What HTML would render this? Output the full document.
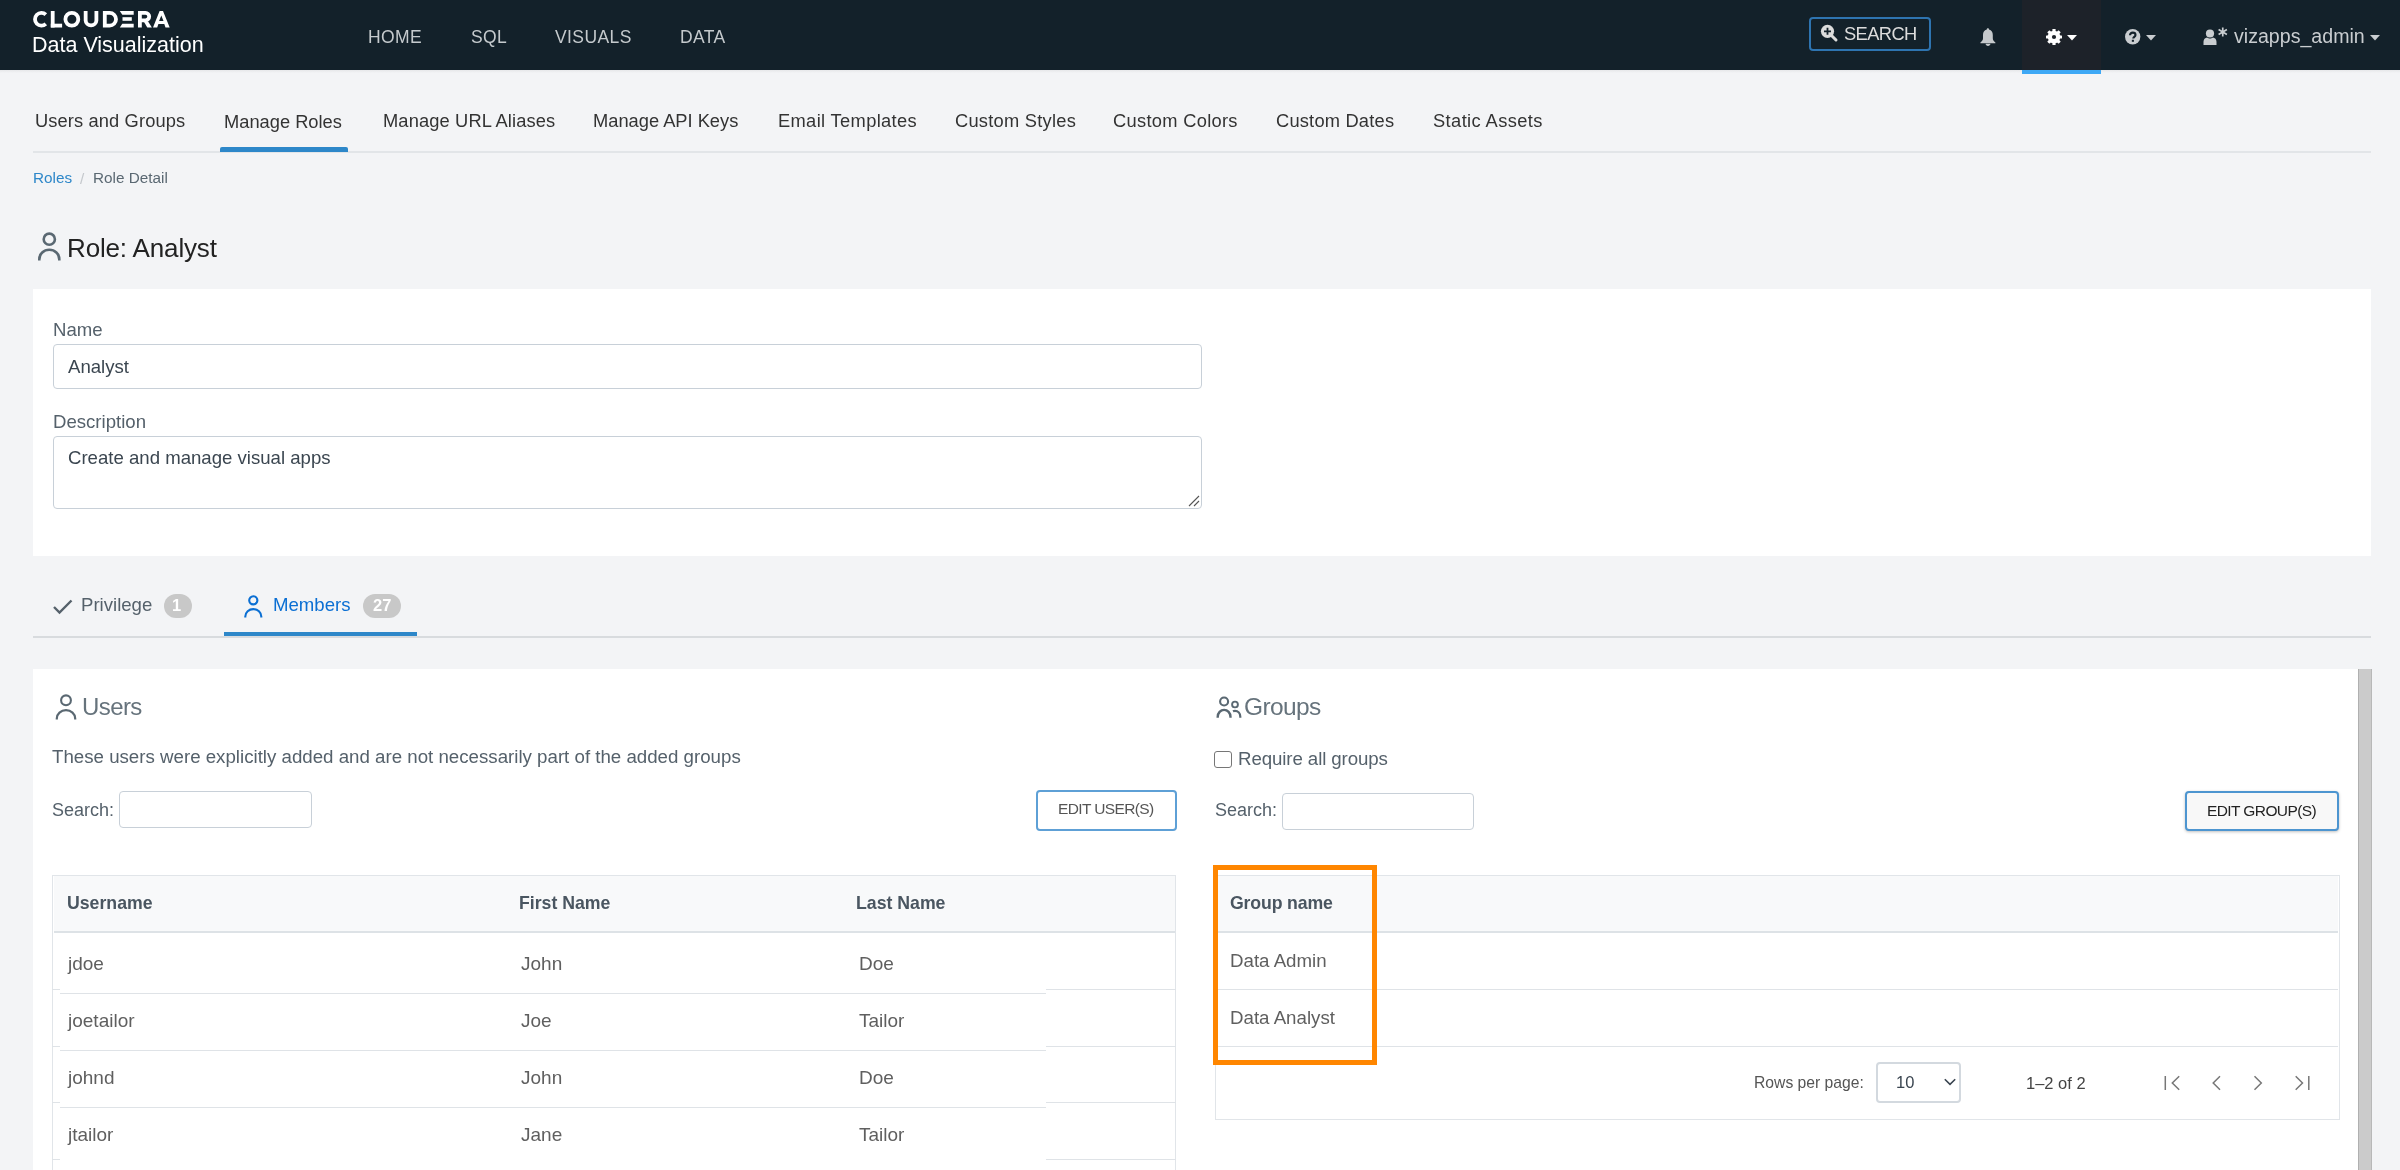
<!DOCTYPE html>
<html><head><meta charset="utf-8">
<style>
*{margin:0;padding:0;box-sizing:border-box}
html,body{width:2400px;height:1170px;overflow:hidden;background:#f3f4f6;font-family:"Liberation Sans",sans-serif}
.a{position:absolute;white-space:nowrap;will-change:transform}
svg{position:absolute;overflow:visible}
#hdr{position:absolute;left:0;top:0;width:2400px;height:70px;background:#13212a}
#hdrsh{position:absolute;left:0;top:70px;width:2400px;height:3px;background:linear-gradient(#e6e7e9,#f3f4f6)}
.nav{font-size:17.5px;color:#c5cacd;letter-spacing:0.4px;top:26.5px}
.sub{font-size:18.3px;color:#333;top:110px}
.card{position:absolute;background:#fff}
.lbl{font-size:18.6px;color:#55616b}
.inp{position:absolute;border:1.5px solid #c8d0d8;border-radius:4px;background:#fff}
.itxt{font-size:18.6px;color:#3b4650}
.th{position:absolute;white-space:nowrap;will-change:transform;font-size:17.7px;font-weight:bold;color:#4a5661;top:893px}
.td{position:absolute;white-space:nowrap;will-change:transform;font-size:19px;color:#5f5f5f}
.gd{font-size:18.7px}
.hl{position:absolute;height:1.5px;background:#dfe3e7}
.vl{position:absolute;width:1.5px;background:#e1e5e9}
</style></head><body>
<div id="hdr"></div>
<div id="hdrsh"></div>
<!-- logo -->
<svg style="left:0;top:0" width="200" height="35" viewBox="0 0 200 35">
 <g stroke="#fff" stroke-width="3.8" fill="none">
  <path d="M45.8 14.6A6.4 6.4 0 1 0 45.8 23.9"/>
  <circle cx="71.85" cy="19.25" r="6.45"/>
  <path d="M85.65 11V20.3A5.38 5.38 0 0 0 96.4 20.3V11"/>
  <path d="M104.8 12.9H109.65A6.35 6.35 0 0 1 109.65 25.6H104.8Z"/>
  <path d="M139.9 27.5V12.9H145.5A3.7 3.7 0 0 1 145.5 20.3H139.9"/>
 </g>
 <g fill="#fff">
  <rect x="50.8" y="11" width="3.8" height="16.5"/>
  <rect x="50.8" y="23.7" width="11.3" height="3.8"/>
  <path d="M119.8 11H133.7V14.8H122.3Z"/>
  <rect x="122.5" y="17.2" width="9.3" height="3.6"/>
  <path d="M143.6 21.2H148L151.9 27.5H147.3Z"/>
  <path d="M122.3 23.8H133.7V27.5H119.8Z"/>
  <path fill-rule="evenodd" d="M153 27.5L159.6 11H163L169.7 27.5H165.5L164.3 24H158.4L157.2 27.5ZM159.1 21H163.5L161.3 15.4Z"/>
 </g>
</svg>
<div class="a" style="left:32px;top:33px;font-size:21.5px;color:#fff">Data Visualization</div>
<!-- nav -->
<div class="a nav" style="left:368px">HOME</div>
<div class="a nav" style="left:471px">SQL</div>
<div class="a nav" style="left:555px">VISUALS</div>
<div class="a nav" style="left:680px">DATA</div>
<!-- header right -->
<div class="a" style="left:1809px;top:17px;width:122px;height:34px;border:2px solid #2e74b0;border-radius:4px"></div>
<svg style="left:1820px;top:24px" width="18" height="18" viewBox="0 0 18 18">
 <circle cx="7.5" cy="7.3" r="6.6" fill="#dcdcdc"/>
 <line x1="11.5" y1="11.5" x2="16" y2="16" stroke="#dcdcdc" stroke-width="3" stroke-linecap="round"/>
 <path d="M7.5 3.8v7M4 7.3h7" stroke="#13212a" stroke-width="1.8"/>
</svg>
<div class="a" style="left:1843.5px;top:22.5px;font-size:18.3px;color:#dcdcdc;letter-spacing:-0.6px">SEARCH</div>
<!-- bell -->
<svg style="left:1979px;top:28px" width="18" height="18" viewBox="0 0 18 18">
 <path d="M9 0.3c.8 0 1 .6 1 1.2 2.6.6 3.8 2.6 3.8 5.6v3.2c0 1.6.9 2.8 2.6 4.2v.8H1.4v-.8c1.7-1.4 2.6-2.6 2.6-4.2V7.1c0-3 1.2-5 3.8-5.6 0-.6.2-1.2 1-1.2z" fill="#c5c9cc"/>
 <path d="M6.6 15.7h4.8c0 1.3-1.1 2.2-2.4 2.2s-2.4-.9-2.4-2.2z" fill="#c5c9cc"/>
</svg>
<div class="a" style="left:2022px;top:0;width:79px;height:70px;background:#1d2229"></div>
<div class="a" style="left:2022px;top:70px;width:79px;height:4px;background:#3ea8f5"></div>
<!-- gear -->
<svg style="left:2046px;top:29px" width="16" height="16" viewBox="-8 -8 16 16">
 <g fill="#fff">
  <circle r="6.3"/>
  <rect x="-1.6" y="-8" width="3.2" height="16" rx=".5"/>
  <rect x="-1.6" y="-8" width="3.2" height="16" rx=".5" transform="rotate(45)"/>
  <rect x="-1.6" y="-8" width="3.2" height="16" rx=".5" transform="rotate(90)"/>
  <rect x="-1.6" y="-8" width="3.2" height="16" rx=".5" transform="rotate(135)"/>
 </g>
 <circle r="2.1" fill="#1d2229"/>
</svg>
<svg style="left:2067px;top:35px" width="10" height="5.5" viewBox="0 0 10 5.5"><path d="M0 0h10L5 5.5z" fill="#fff"/></svg>
<!-- question -->
<svg style="left:2125px;top:29.3px" width="15.4" height="15.4" viewBox="0 0 16 16">
 <circle cx="8" cy="8" r="8" fill="#c9cdd0"/>
 <path d="M5.2 6.6c0-1.8 1.2-2.8 2.9-2.8 1.6 0 2.8 1 2.8 2.4 0 2-2.3 2-2.3 3.6" stroke="#13212a" stroke-width="2.2" fill="none"/>
 <rect x="7.1" y="11.2" width="2.2" height="2.1" fill="#13212a"/>
</svg>
<svg style="left:2146px;top:35px" width="10" height="5.5" viewBox="0 0 10 5.5"><path d="M0 0h10L5 5.5z" fill="#c9cdd0"/></svg>
<!-- user -->
<svg style="left:2203px;top:27px" width="26" height="19" viewBox="0 0 26 19">
 <circle cx="7" cy="6.5" r="4.1" fill="#c9cdd0"/>
 <path d="M0.5 18v-3.2c0-2.6 1.6-4.2 3.6-4.4 1 .8 1.8 1.1 2.9 1.1s1.9-.3 2.9-1.1c2 .2 3.6 1.8 3.6 4.4V18z" fill="#c9cdd0"/>
 <g stroke="#c9cdd0" stroke-width="1.7"><path d="M19.75 0.5v9M15.6 2.6l8.3 4.8M15.6 7.4l8.3-4.8"/></g>
</svg>
<div class="a" style="left:2234px;top:25px;font-size:19.6px;color:#c9cdd0">vizapps_admin</div>
<svg style="left:2370px;top:35px" width="10" height="5.5" viewBox="0 0 10 5.5"><path d="M0 0h10L5 5.5z" fill="#c9cdd0"/></svg>

<!-- sub tabs -->
<div class="a sub" style="left:35px;letter-spacing:0.12px">Users and Groups</div>
<div class="a sub" style="left:224px;top:111px">Manage Roles</div>
<div class="a sub" style="left:382.5px;letter-spacing:0.13px">Manage URL Aliases</div>
<div class="a sub" style="left:593px">Manage API Keys</div>
<div class="a sub" style="left:778px;letter-spacing:0.35px">Email Templates</div>
<div class="a sub" style="left:955px;letter-spacing:0.25px">Custom Styles</div>
<div class="a sub" style="left:1113px;letter-spacing:0.3px">Custom Colors</div>
<div class="a sub" style="left:1276px;letter-spacing:0.2px">Custom Dates</div>
<div class="a sub" style="left:1433px;letter-spacing:0.4px">Static Assets</div>
<div class="hl" style="left:33px;top:151px;width:2338px;height:2px;background:#e2e5e8"></div>
<div class="a" style="left:220px;top:147px;width:127.5px;height:4.5px;background:#2d87c9;border-radius:2px 2px 0 0"></div>

<!-- breadcrumb -->
<div class="a" style="left:33px;top:169px;font-size:15.3px;color:#2d87c9">Roles</div>
<div class="a" style="left:79.5px;top:169.5px;font-size:15.3px;color:#c4c8cc">/</div>
<div class="a" style="left:93px;top:169px;font-size:15.3px;color:#5a6872">Role Detail</div>

<!-- title -->
<svg style="left:37px;top:232px" width="25" height="29" viewBox="0 0 25 29">
 <circle cx="12.3" cy="7.2" r="5.6" stroke="#5a6872" stroke-width="2.6" fill="none"/>
 <path d="M2.3 28.6v-1.2c0-5.6 4.5-9.6 10-9.6s10 4 10 9.6v1.2" stroke="#5a6872" stroke-width="2.6" fill="none"/>
</svg>
<div class="a" style="left:67px;top:233px;font-size:26px;color:#222;letter-spacing:-0.15px">Role: Analyst</div>

<!-- form card -->
<div class="card" style="left:33px;top:289px;width:2338px;height:267px"></div>
<div class="a lbl" style="left:53px;top:319px">Name</div>
<div class="inp" style="left:53px;top:344px;width:1149px;height:45px"></div>
<div class="a itxt" style="left:68px;top:356px">Analyst</div>
<div class="a lbl" style="left:53px;top:410.5px">Description</div>
<div class="inp" style="left:53px;top:435.5px;width:1149px;height:73.5px"></div>
<div class="a itxt" style="left:68px;top:447px">Create and manage visual apps</div>
<svg style="left:1188px;top:495px" width="12" height="12" viewBox="0 0 12 12"><path d="M11 1L1 11M11 6L6 11" stroke="#555" stroke-width="1.1"/></svg>

<!-- tabs -->
<svg style="left:53px;top:599px" width="20" height="15" viewBox="0 0 20 15"><path d="M1 8l5.5 5.5L18.5 1.5" stroke="#55616b" stroke-width="2.4" fill="none"/></svg>
<div class="a" style="left:81px;top:594px;font-size:18.6px;color:#55616b">Privilege</div>
<div class="a" style="left:163.5px;top:594px;width:28px;height:24px;border-radius:12px;background:#c8c8c8"></div>
<div class="a" style="left:171.5px;top:596px;font-size:16.5px;font-weight:bold;color:#fff">1</div>
<svg style="left:244px;top:595px" width="19" height="23" viewBox="0 0 19 23">
 <circle cx="9.3" cy="5.3" r="4.1" stroke="#0b6fd3" stroke-width="2.1" fill="none"/>
 <path d="M1.3 22.6v-1c0-4.3 3.6-7.5 8-7.5s8 3.2 8 7.5v1" stroke="#0b6fd3" stroke-width="2.1" fill="none"/>
</svg>
<div class="a" style="left:273px;top:594px;font-size:18.6px;color:#0b6fd3">Members</div>
<div class="a" style="left:362.5px;top:594px;width:38px;height:24px;border-radius:12px;background:#c8c8c8"></div>
<div class="a" style="left:372.5px;top:596px;font-size:16.5px;font-weight:bold;color:#fff">27</div>
<div class="hl" style="left:33px;top:636px;width:2338px;height:1.5px;background:#d8dbde"></div>
<div class="a" style="left:224px;top:632px;width:193px;height:4px;background:#2d87c9"></div>

<!-- members card -->
<div class="card" style="left:33px;top:669px;width:2338px;height:501px"></div>
<div class="a" style="left:2358px;top:669px;width:13.5px;height:501px;background:#cbcbcb;border-left:1px solid #b0b0b0;border-right:1px solid #b8b8b8"></div>

<!-- Users -->
<svg style="left:55px;top:694px" width="22" height="26" viewBox="0 0 22 26">
 <circle cx="11" cy="6.3" r="4.9" stroke="#5a6872" stroke-width="2.1" fill="none"/>
 <path d="M1.8 25.6v-1.1c0-4.7 4.1-8.3 9.2-8.3s9.2 3.6 9.2 8.3v1.1" stroke="#5a6872" stroke-width="2.2" fill="none"/>
</svg>
<div class="a" style="left:82px;top:692.5px;font-size:24px;color:#66737c;letter-spacing:-0.6px">Users</div>
<div class="a" style="left:52px;top:746px;font-size:18.7px;color:#55616b">These users were explicitly added and are not necessarily part of the added groups</div>
<div class="a" style="left:52px;top:800px;font-size:18px;color:#55616b">Search:</div>
<div class="inp" style="left:119px;top:791px;width:192.5px;height:37px"></div>
<div class="a" style="left:1036px;top:789.5px;width:140.5px;height:40.5px;border:2px solid #5ea0d6;border-radius:4px;background:#fff"></div>
<div class="a" style="left:1058px;top:800px;font-size:15.5px;color:#555;letter-spacing:-0.62px">EDIT USER(S)</div>

<!-- users table -->
<div class="a" style="left:52px;top:874.5px;width:1124px;height:300px;border:1.5px solid #e1e5e9;border-bottom:none;background:#fff"></div>
<div class="a" style="left:53.5px;top:876px;width:1121px;height:55.5px;background:#f8f9fa"></div>
<div class="hl" style="left:53.5px;top:931px;width:1121px;height:2.2px;background:#dde2e6"></div>
<div class="th" style="left:67px">Username</div>
<div class="th" style="left:519px">First Name</div>
<div class="th" style="left:856px">Last Name</div>
<!-- row lines -->
<div class="hl" style="left:52px;top:989px;width:8px;height:1px"></div>
<div class="hl" style="left:60px;top:992.5px;width:986px"></div>
<div class="hl" style="left:1046px;top:989px;width:130px;height:1px"></div>
<div class="hl" style="left:52px;top:1046px;width:8px;height:1px"></div>
<div class="hl" style="left:60px;top:1049.5px;width:986px"></div>
<div class="hl" style="left:1046px;top:1046px;width:130px;height:1px"></div>
<div class="hl" style="left:52px;top:1102px;width:8px;height:1px"></div>
<div class="hl" style="left:60px;top:1106.5px;width:986px"></div>
<div class="hl" style="left:1046px;top:1102px;width:130px;height:1px"></div>
<div class="hl" style="left:52px;top:1159px;width:8px;height:1px"></div>
<div class="hl" style="left:1046px;top:1159px;width:130px;height:1px"></div>
<!-- rows -->
<div class="td" style="left:67.5px;top:953px">jdoe</div>
<div class="td" style="left:520.5px;top:953px">John</div>
<div class="td" style="left:858.5px;top:953px">Doe</div>
<div class="td" style="left:67.5px;top:1010px">joetailor</div>
<div class="td" style="left:520.5px;top:1010px">Joe</div>
<div class="td" style="left:858.5px;top:1010px">Tailor</div>
<div class="td" style="left:67.5px;top:1067px">johnd</div>
<div class="td" style="left:520.5px;top:1067px">John</div>
<div class="td" style="left:858.5px;top:1067px">Doe</div>
<div class="td" style="left:67.5px;top:1124px">jtailor</div>
<div class="td" style="left:520.5px;top:1124px">Jane</div>
<div class="td" style="left:858.5px;top:1124px">Tailor</div>

<!-- Groups -->
<svg style="left:1216px;top:696px" width="26" height="22" viewBox="0 0 26 22">
 <circle cx="8.1" cy="5.5" r="4" stroke="#5a6872" stroke-width="2.1" fill="none"/>
 <path d="M1.7 21.7v-.8c0-4 2.9-7 6.4-7s6.4 3 6.4 7v.8" stroke="#5a6872" stroke-width="2.4" fill="none"/>
 <circle cx="19" cy="8.5" r="2.9" stroke="#5a6872" stroke-width="1.9" fill="none"/>
 <path d="M17 15.2c.6-.3 1.3-.4 2-.4 3 0 5.3 2.5 5.3 5.9v1" stroke="#5a6872" stroke-width="2.2" fill="none"/>
</svg>
<div class="a" style="left:1244px;top:693px;font-size:24.5px;color:#66737c;letter-spacing:-0.6px">Groups</div>
<div class="a" style="left:1214px;top:750.5px;width:17.8px;height:17.2px;border:1.5px solid #767676;border-radius:3px;background:#fff"></div>
<div class="a" style="left:1238px;top:748px;font-size:18.7px;color:#55616b;letter-spacing:-0.1px">Require all groups</div>
<div class="a" style="left:1214.5px;top:800px;font-size:18px;color:#55616b">Search:</div>
<div class="inp" style="left:1282px;top:792.5px;width:192px;height:37px"></div>
<div class="a" style="left:2185px;top:791px;width:154px;height:39.5px;border:2px solid #4d95d0;border-radius:4px;background:#f8f8f8;box-shadow:0 1px 3px rgba(0,0,0,.25)"></div>
<div class="a" style="left:2207px;top:801.5px;font-size:15.5px;color:#222;letter-spacing:-0.6px">EDIT GROUP(S)</div>

<!-- groups table -->
<div class="a" style="left:1214.5px;top:874.5px;width:1124.5px;height:245px;border:1.5px solid #e1e5e9;background:#fff"></div>
<div class="a" style="left:1216px;top:876px;width:1121.5px;height:55.5px;background:#f8f9fa"></div>
<div class="hl" style="left:1216px;top:931px;width:1121.5px;height:2.2px;background:#dde2e6"></div>
<div class="hl" style="left:1216px;top:989px;width:1121.5px;height:1px"></div>
<div class="hl" style="left:1216px;top:1046px;width:1121.5px;height:1px"></div>
<div class="th" style="left:1230px;letter-spacing:-0.15px">Group name</div>
<div class="td gd" style="left:1230px;top:950px">Data Admin</div>
<div class="td gd" style="left:1230px;top:1006.5px">Data Analyst</div>
<!-- pagination -->
<div class="a" style="left:1754px;top:1074px;font-size:15.7px;color:#555">Rows per page:</div>
<div class="inp" style="left:1875.5px;top:1062px;width:85px;height:40.5px;border:2px solid #d3d9df"></div>
<div class="a" style="left:1896px;top:1072.5px;font-size:16.5px;color:#3a4550">10</div>
<svg style="left:1943.5px;top:1078px" width="12" height="8" viewBox="0 0 12 8"><path d="M0.8 1.2l5.2 5.2 5.2-5.2" stroke="#3a4550" stroke-width="1.6" fill="none"/></svg>
<div class="a" style="left:2026px;top:1073.5px;font-size:16.5px;color:#444">1–2 of 2</div>
<svg style="left:2164px;top:1075px" width="150" height="16" viewBox="0 0 150 16">
 <g stroke="#777" stroke-width="1.5" fill="none">
  <path d="M1.3 1v14M15.2 1.2L8.3 8l6.9 6.8"/>
  <path d="M56 1.2L49.2 8l6.8 6.8"/>
  <path d="M90.5 1.2L97.3 8l-6.8 6.8"/>
  <path d="M131.7 1.2L138.5 8l-6.8 6.8M144.8 1v14"/>
 </g>
</svg>
<!-- orange highlight -->
<div class="a" style="left:1213.3px;top:865px;width:164.4px;height:200.4px;border:5.6px solid #ff8600"></div>

</body></html>
